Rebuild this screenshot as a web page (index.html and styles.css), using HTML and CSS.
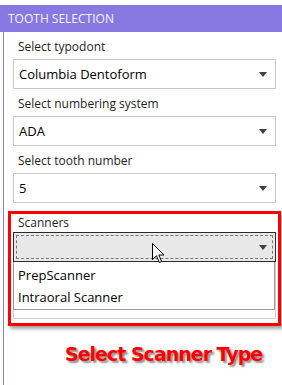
FILE: index.html
```html
<!DOCTYPE html>
<html lang="en">
<head>
    <meta charset="UTF-8">
    <meta name="viewport" content="width=device-width, initial-scale=1.0">
    <title>Tooth Selection</title>
    <link rel="stylesheet" href="styles.css">
</head>
<body>
<div class="header">TOOTH SELECTION</div>

<div class="panel">
    <div class="field">
        <div class="label">Select typodont</div>
        <div class="combo">
            <span class="value">Columbia Dentoform</span>
            <span class="arrow"></span>
        </div>
    </div>

    <div class="field">
        <div class="label">Select numbering system</div>
        <div class="combo">
            <span class="value">ADA</span>
            <span class="arrow"></span>
        </div>
    </div>

    <div class="field">
        <div class="label">Select tooth number</div>
        <div class="combo">
            <span class="value">5</span>
            <span class="arrow"></span>
        </div>
    </div>

    <!-- highlighted scanners field -->
    <div class="highlight">
        <div class="label label-tight">Scanners</div>
        <div class="combo combo-open">
            <span class="focus-ring"></span>
            <span class="value"></span>
            <span class="arrow"></span>
            <svg class="cursor" width="13" height="21" viewBox="0 0 13 21">
                <path d="M0.5 0.5 L0.5 16.5 L4.5 12.8 L7.3 19.5 L9.6 18.5 L6.9 12 L12 12 Z" fill="#fff" stroke="#000" stroke-width="1"/>
            </svg>
        </div>
        <div class="list-frame">
            <ul class="dropdown">
                <li>PrepScanner</li>
                <li>Intraoral Scanner</li>
            </ul>
        </div>
    </div>

    <div class="caption">Select Scanner Type</div>
</div>
</body>
</html>
```

FILE: styles.css
```css
body {
    margin: 0;
    background: #fff;
    font-family: "Open Sans", "Noto Sans", sans-serif;
    color: #1e1e1e;
}
.header {
    margin-top: 5px;
    height: 27px;
    line-height: 27px;
    padding-left: 8px;
    background: #8779e1;
    color: #f4f2ff;
    font-size: 12px;
}
.panel {
    box-sizing: border-box;
    height: calc(100vh - 32px);
    margin-left: 3px;
    border-left: 1px solid #8779e1;
    padding: 6px 6px 0 9px;
}
.field {
    margin-bottom: 6px;
}
.label {
    height: 18px;
    line-height: 18px;
    margin-bottom: 3px;
    padding-left: 5px;
    font-size: 12px;
}
.label-tight {
    margin-bottom: 0;
}
.combo {
    position: relative;
    display: flex;
    align-items: center;
    height: 28px;
    border: 1px solid #c8c8c8;
    padding: 0 8px 0 5px;
    font-size: 13px;
    color: #000;
}
.value {
    flex: 1;
}
.arrow {
    width: 0;
    height: 0;
    border-left: 4px solid transparent;
    border-right: 4px solid transparent;
    border-top: 5px solid #404040;
}
.combo-open {
    border-color: #2a2a2a;
    background: #e8e8e8;
}
.focus-ring {
    position: absolute;
    top: 2px;
    left: 2px;
    right: 2px;
    bottom: 2px;
    border: 1px dashed #777;
}
.cursor {
    position: absolute;
    left: 138px;
    top: 10px;
}
.highlight {
    margin: 8px -5px 0 -5px;
    padding: 0 2px 4px 2px;
    border: 3px solid #f00;
    box-shadow: 2px 3px 3px rgba(0, 0, 0, 0.35);
}
.list-frame {
    border: 1px solid #cfcfcf;
    border-top: none;
    padding-bottom: 8px;
}
.dropdown {
    list-style: none;
    margin: 0 0 0 -1px;
    padding: 2px 0 1px 0;
    border: 1px solid #a09c90;
    border-top: none;
    font-size: 13px;
    color: #000;
}
.dropdown li {
    height: 22px;
    line-height: 22px;
    padding-left: 4px;
}
.caption {
    margin-top: 17px;
    padding-left: 52px;
    font-family: "DejaVu Sans", sans-serif;
    font-weight: bold;
    font-size: 19px;
    color: #f00;
    letter-spacing: -1px;
    text-shadow: 2px 2px 2px rgba(0, 0, 0, 0.45);
}
```
